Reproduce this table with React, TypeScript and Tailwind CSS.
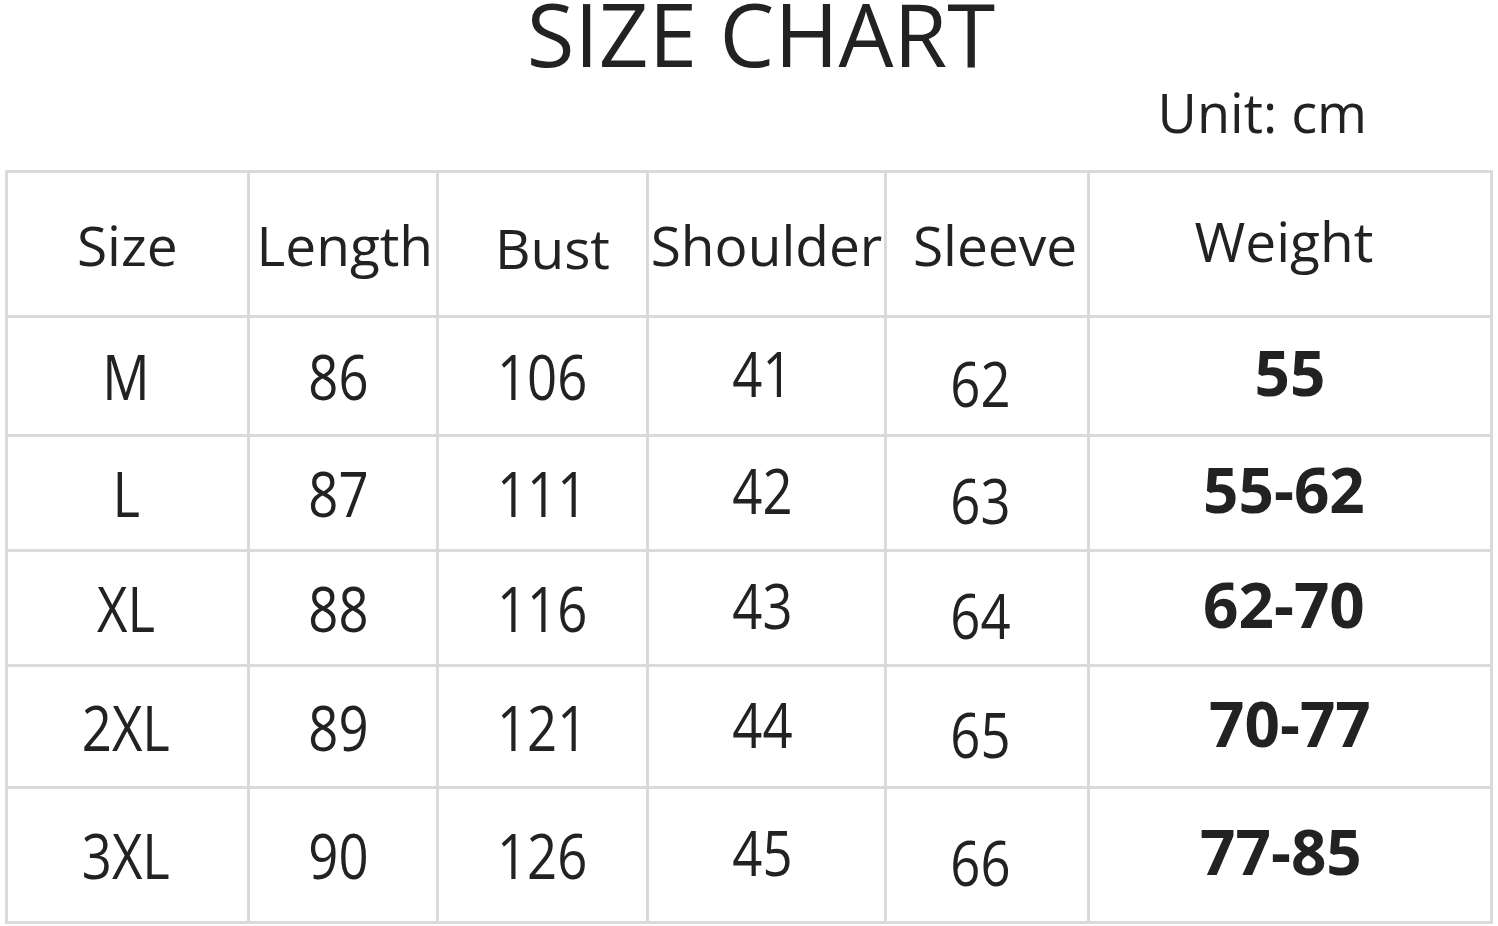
import React from 'react';

const headers = [
    { label: 'Size', off: '' },
    { label: 'Length', off: 'translate-x-[2px]' },
    { label: 'Bust', off: 'translate-x-[10px] translate-y-[3px]' },
    { label: 'Shoulder', off: '' },
    { label: 'Sleeve', off: 'translate-x-[8px]' },
    { label: 'Weight', off: '-translate-x-[6px] -translate-y-[4px]' }
];

const rows = [
    { size: 'M', length: '86', bust: '106', shoulder: '41', sleeve: '62', weight: '55', h: 'h-[119px]', wOff: '' },
    { size: 'L', length: '87', bust: '111', shoulder: '42', sleeve: '63', weight: '55-62', h: 'h-[115px]', wOff: '-translate-x-[6px]' },
    { size: 'XL', length: '88', bust: '116', shoulder: '43', sleeve: '64', weight: '62-70', h: 'h-[115px]', wOff: '-translate-x-[6px]' },
    { size: '2XL', length: '89', bust: '121', shoulder: '44', sleeve: '65', weight: '70-77', h: 'h-[122px]', wOff: '' },
    { size: '3XL', length: '90', bust: '126', shoulder: '45', sleeve: '66', weight: '77-85', h: 'h-[135px]', wOff: '-translate-x-[9px]' }
];

const cols = ['w-[242px]', 'w-[190px]', 'w-[210px]', 'w-[239px]', 'w-[203px]', 'w-[404px]'];

// per-column nudges for the body digits
const bodyOff = ['-translate-x-[1px]', '-translate-x-[4px]', '', '-translate-x-[4px] -translate-y-[3px]', '-translate-x-[7px] translate-y-[7px]'];

const SizeChart = () => {
    return (
        <div className="w-[1498px] h-[926px] bg-white text-[#222] font-['Open_Sans',sans-serif] overflow-hidden">
            <h1 className="text-center text-[87px] leading-[67px] pl-[24px] font-normal">SIZE CHART</h1>
            <div className="flex justify-end pr-[131px] mt-[18px] text-[54px] leading-none">Unit: cm</div>

            <div className="ml-[5px] mt-[31px] w-[1488px] border-t-[3px] border-l-[3px] border-[#dadada]">
                <div className="flex h-[145px]">
                    {headers.map((h, i) => (
                        <div
                            key={h.label}
                            className={`${cols[i]} flex items-center justify-center border-r-[3px] border-b-[3px] border-[#dadada]`}
                        >
                            <span className={`text-[55px] leading-none ${h.off}`}>{h.label}</span>
                        </div>
                    ))}
                </div>
                {rows.map(r => (
                    <div key={r.size} className={`flex ${r.h}`}>
                        {[r.size, r.length, r.bust, r.shoulder, r.sleeve].map((v, i) => (
                            <div
                                key={i}
                                className={`${cols[i]} flex items-center justify-center border-r-[3px] border-b-[3px] border-[#dadada]`}
                            >
                                <span className={`text-[62px] leading-none scale-x-[0.85] ${bodyOff[i]}`}>{v}</span>
                            </div>
                        ))}
                        <div className={`${cols[5]} flex items-center justify-center border-r-[3px] border-b-[3px] border-[#dadada]`}>
                            <span className={`text-[62px] leading-none font-bold -translate-y-[4px] ${r.wOff}`}>{r.weight}</span>
                        </div>
                    </div>
                ))}
            </div>
        </div>
    );
};

export default SizeChart;
